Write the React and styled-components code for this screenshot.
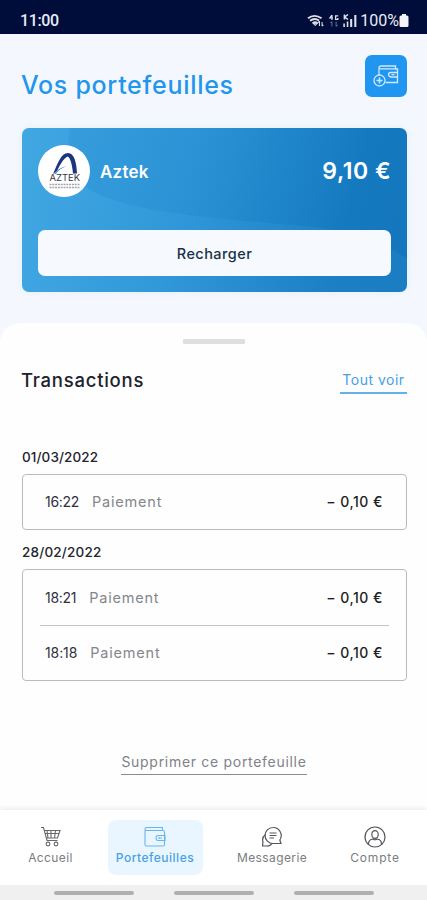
import React from 'react'
import styled, { createGlobalStyle } from 'styled-components';

const GlobalStyle = createGlobalStyle`
    * {
        box-sizing: border-box;
    }

    body {
        margin: 0;
        font-family: Inter, "Open Sans", sans-serif;
        background: #f4f8fe;
        overflow: hidden;
    }
`;

const Screen = styled.div`
    width: 427px;
    height: 900px;
    display: flex;
    flex-direction: column;
    overflow: hidden;
`;

const StatusBar = styled.div`
    height: 34px;
    flex: none;
    padding: 7px 18px 0 20px;
    display: flex;
    justify-content: space-between;
    align-items: center;
    background: #000d3b;
    color: #e9ebf2;
    font-family: Roboto, sans-serif;
    font-size: 16px;
    font-weight: 500;
`;

const Clock = styled.span`
    letter-spacing: -0.4px;
`;

const StatusIcons = styled.div`
    display: flex;
    align-items: center;
    font-weight: 400;
`;

const Header = styled.header`
    height: 94px;
    flex: none;
    padding: 21px 20px 0 21px;
    display: flex;
    justify-content: space-between;
    align-items: flex-start;
`;

const Title = styled.h1`
    margin: 14px 0 0;
    color: #2196ec;
    font-size: 25px;
    line-height: 32px;
    font-weight: 500;
    letter-spacing: 0.7px;
`;

const AddButton = styled.button`
    width: 42px;
    height: 42px;
    padding: 0;
    border: none;
    border-radius: 7px;
    display: flex;
    align-items: center;
    justify-content: center;
    background: #2196f0;
`;

const WalletCard = styled.section`
    position: relative;
    height: 164px;
    flex: none;
    margin: 0 20px 0 22px;
    padding: 17px 16px 16px;
    display: flex;
    flex-direction: column;
    justify-content: space-between;
    border-radius: 7px;
    overflow: hidden;
    background: linear-gradient(105deg, #3a9fde 0%, #2b93d5 42%, #1579c0 82%, #1477bd 100%);
    box-shadow: 0 0 8px #e6edf6;
`;

const CardWave = styled.svg`
    position: absolute;
    left: 0;
    top: 0;
`;

const CardTop = styled.div`
    position: relative;
    display: flex;
    align-items: center;
    color: #fff;
`;

const Avatar = styled.div`
    width: 52px;
    height: 52px;
    border-radius: 50%;
    background: #fff;
`;

const WalletName = styled.span`
    flex: 1;
    margin: 1px 0 0 10px;
    font-size: 17px;
    font-weight: 600;
    letter-spacing: 0.2px;
`;

const Balance = styled.span`
    font-size: 23px;
    font-weight: 600;
    letter-spacing: 0.5px;
`;

const ReloadButton = styled.button`
    position: relative;
    height: 46px;
    border: none;
    border-radius: 7px;
    background: #f6f9fe;
    color: #183247;
    font-family: inherit;
    font-size: 14.5px;
    font-weight: 500;
    letter-spacing: 0.45px;
`;

const Sheet = styled.main`
    flex: 1;
    margin-top: 31px;
    padding: 0 20px 0 22px;
    display: flex;
    flex-direction: column;
    border-radius: 20px 20px 0 0;
    background: #fefefe;
`;

const Handle = styled.div`
    width: 62px;
    height: 5px;
    margin: 16px 0 0 161px;
    border-radius: 1px;
    background: #dedfdf;
`;

const SheetHeader = styled.div`
    height: 50px;
    display: flex;
    justify-content: space-between;
    align-items: flex-end;
`;

const SheetTitle = styled.h2`
    margin: 0 0 0 -1px;
    color: #20222c;
    font-size: 18.5px;
    line-height: 27px;
    font-weight: 500;
    letter-spacing: 0.75px;
`;

const SeeAll = styled.a`
    width: 67px;
    height: 26px;
    text-align: center;
    white-space: nowrap;
    border-bottom: 2px solid #62b0ec;
    color: #479fe6;
    font-size: 14px;
    line-height: 24px;
    letter-spacing: 0.5px;
`;

const History = styled.div`
    margin-top: 53px;
`;

const DateLabel = styled.div`
    height: 27px;
    padding-bottom: 3px;
    color: #23242e;
    font-size: 13.5px;
    line-height: 20px;
    font-weight: 500;
    letter-spacing: ${props => props.$spacing}px;
`;

const TransactionList = styled.div`
    margin-bottom: 12px;
    padding: 0 17px;
    border: 1px solid #b9bbbd;
    border-radius: 4px;
`;

const Transaction = styled.div`
    height: 55px;
    padding: 0 6px 1px 5px;
    display: flex;
    align-items: center;
    font-size: 14px;

    &:only-child {
        height: 54px;
    }

    & + & {
        border-top: 1px solid #c3c4c6;
    }
`;

const Time = styled.span`
    color: #30303e;
    letter-spacing: ${props => props.$spacing}px;
`;

const Kind = styled.span`
    flex: 1;
    margin-left: 13px;
    color: #84868c;
    font-size: 14.5px;
    letter-spacing: 0.8px;
`;

const Amount = styled.span`
    color: #1b1c25;
    font-weight: 500;
    letter-spacing: 0.5px;
`;

const DeleteLink = styled.a`
    width: 186px;
    height: 24px;
    margin: 58px 0 0 99px;
    text-align: center;
    white-space: nowrap;
    border-bottom: 1px solid #898b91;
    color: #808289;
    font-size: 14px;
    line-height: 21px;
    letter-spacing: 0.7px;
`;

const NavBar = styled.nav`
    position: relative;
    height: 75px;
    flex: none;
    padding: 10px 0 0 3px;
    display: grid;
    grid-template-columns: 95px 114px 120px 86px;
    justify-items: center;
    align-items: start;
    background: #fff;
    box-shadow: 0 -2px 4px #ededed;
`;

const NavItem = styled.a`
    min-width: 95px;
    height: 55px;
    padding-top: 6px;
    display: flex;
    flex-direction: column;
    align-items: center;
    border-radius: 8px;
    background: ${props => props.$active ? '#eaf6ff' : 'transparent'};
    color: ${props => props.$active ? '#45a1e9' : '#7b7c80'};
    font-size: 12px;
    line-height: 18px;
    font-weight: ${props => props.$active ? 500 : 400};
    letter-spacing: ${props => props.$spacing}px;
    white-space: nowrap;

    svg {
        margin-bottom: 1px;
    }
`;

const SystemBar = styled.div`
    height: 15px;
    flex: none;
    padding: 6px 0 0 54px;
    display: flex;
    gap: 40px;
    background: #f0f0f0;
`;

const SystemKey = styled.div`
    width: 80px;
    height: 4px;
    border-radius: 2px;
    background: #b0b0b0;
`;

const SignalIcons = () => (
    <svg width="53" height="16" viewBox="0 0 51 16" preserveAspectRatio="none" fill="none" stroke="#dfe2ea">
        <path d="M1 5.2Q7 0.5 14 5.2M3 7.8Q7.3 4.3 11.5 7.6M5.5 10.2Q8 8.4 10 10.2" strokeWidth="1.9" />
        <path d="M8 12.3l-2-2h4zM12 8v5M14.5 9v4M10.8 9.3L12 8M14.5 13.2l1.2-1.3" strokeWidth="1" />
        <path d="M24 2L22 5h3M24 2v5M30 2.8h-2.5v3.6h2.2V5" strokeWidth="1.2" />
        <path d="M24 8.5v5M22.5 10l1.5-1.5M28 8.5v5M28 13.5l1.5-1.5" strokeWidth="1" opacity=".45" />
        <path d="M36 1.5v5M39.5 1.5l-3.3 2.5 3.3 2.5M35.7 10.5v3.5M39 8.5v5.5" strokeWidth="1.5" />
        <path d="M42.5 6v8M46.5 2v12" strokeWidth="2" />
    </svg>
);

const BatteryIcon = () => (
    <svg width="10" height="15" viewBox="0 0 10 15">
        <path d="M3 1h4v1.5h1q1.5 0 1.5 1.5v8.5Q9.5 14 8 14H2Q.5 14 .5 12.5V4Q.5 2.5 2 2.5h1z" fill="#f3f4f7" />
    </svg>
);

const WalletAddIcon = () => (
    <svg width="26" height="23" viewBox="0 0 26 23" fill="none" stroke="#cfe9ff" strokeWidth="1.3">
        <path d="M6 10V3Q6 1 8 1H22.5V4H24.5V17.5H12.5M6 3.8H24" />
        <path d="M24.5 7.5H18Q15.5 7.5 15.5 9.5T18 12H24.5M18.5 9.7h3" />
        <circle cx="6.5" cy="15.5" r="5.5" />
        <path d="M6.5 12.5v6M3.5 15.5h6" strokeWidth="1.5" />
    </svg>
);

const AztekLogo = () => (
    <svg width="52" height="52" viewBox="0 0 52 52">
        <path d="M15 29C20 18 23 8 30 8C36.5 8 38.5 18 39 28.5H35C34 18 32 12.5 29.5 11.5C25 14 22 20 19 26Z" fill="#1d347f" />
        <path d="M16 29Q20 23 28.5 21Q21 24 18 29Z" fill="#4f98d8" />
        <text x="11.5" y="36.3" fontSize="9.2" fill="#36373e" textLength="30.5" lengthAdjust="spacingAndGlyphs">AZTEK</text>
        <path d="M11.5 39.5H41.5M11.5 42.5H41.5" stroke="#a5a6ac" strokeWidth="1.4" strokeDasharray="2 .8" />
    </svg>
);

const CartIcon = () => (
    <svg width="22" height="22" viewBox="0 0 22 22" fill="none" stroke="#67686c" strokeWidth="1.1">
        <path d="M1 1.5H3.5L7 14.5H17.5M4 4.5H20L17.5 12H6.3M5 7.5H19M8 12L7 4.5M11 12V4.5M14.5 12L15.5 4.5" />
        <circle cx="8" cy="18" r="1.9" />
        <circle cx="16" cy="18" r="1.9" />
    </svg>
);

const WalletIcon = () => (
    <svg width="22" height="22" viewBox="0 0 22 22" fill="none" stroke="#68b5ee" strokeWidth="1.1">
        <path d="M1 4V18.5Q1 20 2.5 20H19Q20.5 20 20.5 18.5V6Q20.5 4.5 19 4.5H2.5Q1 4.5 1 3Q1 1.5 2.5 1.5H18.5V4.5" />
        <path d="M21 9.5H14Q12 9.5 12 12T14 14.5H21ZM15 11v2M15 12h3" />
    </svg>
);

const ChatIcon = () => (
    <svg width="22" height="22" viewBox="0 0 22 22" fill="none" stroke="#55565b" strokeWidth="1.2">
        <path d="M12 1.5A8 8 0 1 0 12 17.5H20L18.8 14A8 8 0 0 0 12 1.5Z" />
        <path d="M4.5 8.5Q.5 11.5 2 16L1.5 20H6Q9 20.3 11 17.7" />
        <path d="M8.5 7H15.5M8.5 9.5H15.5M8.5 12H13" strokeWidth="1" />
    </svg>
);

const AccountIcon = () => (
    <svg width="22" height="22" viewBox="0 0 22 22" fill="none" stroke="#55565b" strokeWidth="1.2">
        <circle cx="11" cy="11" r="10" />
        <ellipse cx="11" cy="8.5" rx="3.2" ry="3.9" />
        <path d="M4.5 18Q4.5 13.5 9 13Q11 14.5 13 13Q17.5 13.5 17.5 18" />
    </svg>
);

const days = [
    { date: '01/03/2022', spacing: 0.1, items: [{ time: '16:22', spacing: -0.3 }] },
    { date: '28/02/2022', spacing: 0.2, items: [{ time: '18:21', spacing: -0.3 }, { time: '18:18', spacing: -0.1 }] },
];

const tabs = [
    { label: 'Accueil', icon: <CartIcon />, spacing: 0.4 },
    { label: 'Portefeuilles', icon: <WalletIcon />, spacing: 0.5, active: true },
    { label: 'Messagerie', icon: <ChatIcon />, spacing: 0.4 },
    { label: 'Compte', icon: <AccountIcon />, spacing: 0.8 },
];

const App = () => (
    <Screen>
        <GlobalStyle />
        <StatusBar>
            <Clock>11:00</Clock>
            <StatusIcons>
                <SignalIcons />
                <span>100%</span>
                <BatteryIcon />
            </StatusIcons>
        </StatusBar>
        <Header>
            <Title>Vos portefeuilles</Title>
            <AddButton><WalletAddIcon /></AddButton>
        </Header>
        <WalletCard>
            <CardWave width="385" height="164" viewBox="0 0 385 164">
                <defs>
                    <linearGradient id="wave">
                        <stop offset="0" stopColor="#55c0f2" stopOpacity=".26" />
                        <stop offset=".4" stopColor="#55b6ee" stopOpacity=".13" />
                        <stop offset="1" stopColor="#55b6ee" stopOpacity=".1" />
                    </linearGradient>
                </defs>
                <path d="M0 0H48C42 30 52 56 78 67C128 88 220 92 300 100C350 108 372 124 385 130V164H0Z" fill="url(#wave)" />
            </CardWave>
            <CardTop>
                <Avatar><AztekLogo /></Avatar>
                <WalletName>Aztek</WalletName>
                <Balance>9,10 €</Balance>
            </CardTop>
            <ReloadButton>Recharger</ReloadButton>
        </WalletCard>
        <Sheet>
            <Handle />
            <SheetHeader>
                <SheetTitle>Transactions</SheetTitle>
                <SeeAll>Tout voir</SeeAll>
            </SheetHeader>
            <History>
                {days.map(day => (
                    <React.Fragment key={day.date}>
                        <DateLabel $spacing={day.spacing}>{day.date}</DateLabel>
                        <TransactionList>
                            {day.items.map(item => (
                                <Transaction key={item.time}>
                                    <Time $spacing={item.spacing}>{item.time}</Time>
                                    <Kind>Paiement</Kind>
                                    <Amount>− 0,10 €</Amount>
                                </Transaction>
                            ))}
                        </TransactionList>
                    </React.Fragment>
                ))}
            </History>
            <DeleteLink>Supprimer ce portefeuille</DeleteLink>
        </Sheet>
        <NavBar>
            {tabs.map(tab => (
                <NavItem key={tab.label} $active={tab.active} $spacing={tab.spacing}>
                    {tab.icon}
                    {tab.label}
                </NavItem>
            ))}
        </NavBar>
        <SystemBar>
            <SystemKey />
            <SystemKey />
            <SystemKey />
        </SystemBar>
    </Screen>
);

export default App;
